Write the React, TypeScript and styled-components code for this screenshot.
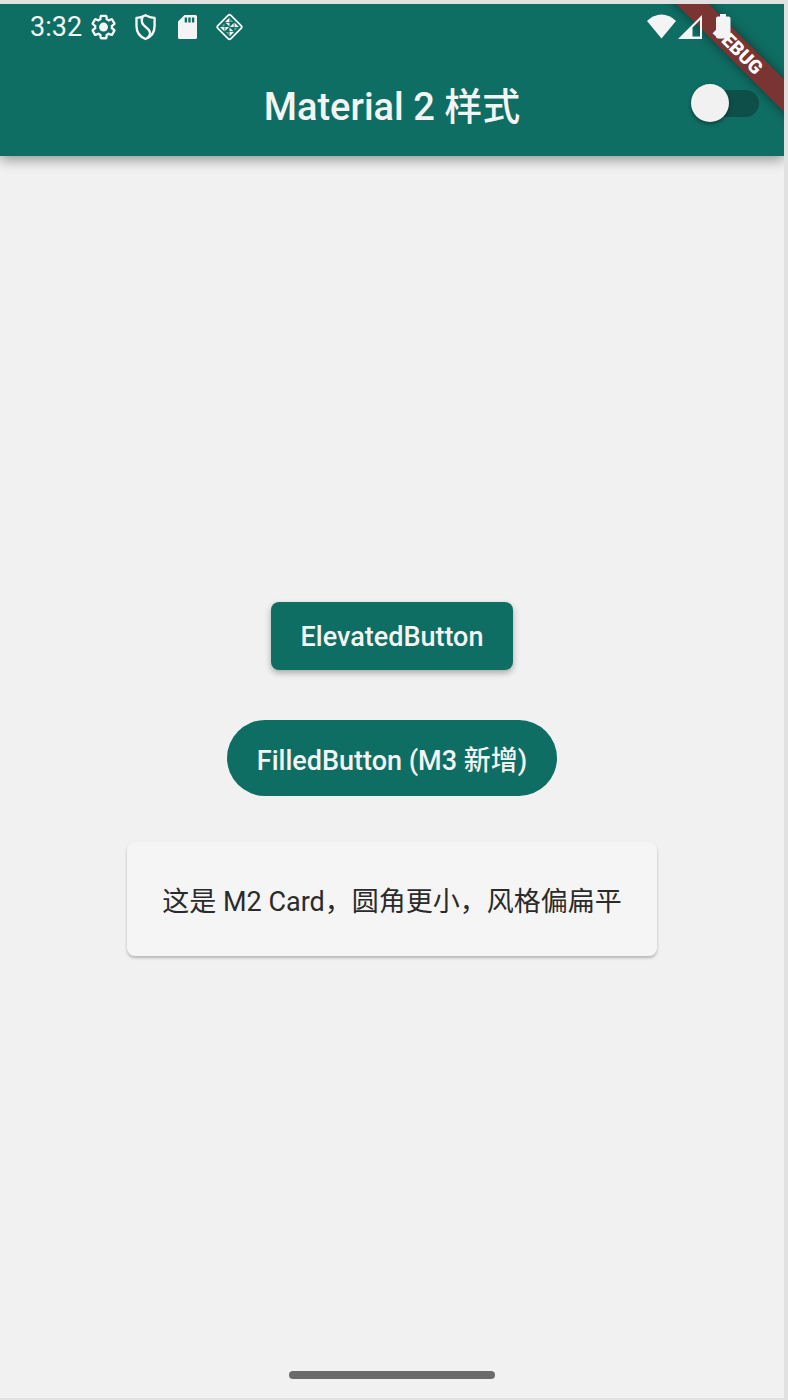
import React from "react";
import styled, { createGlobalStyle } from "styled-components";

const color = {
  teal: "#0f6e63",
  light: "#f4f4f4",
  surface: "#f1f1f1",
  card: "#f5f5f5",
  frame: "#e1e1e1",
  ink: "#2b2b2b",
};

const GlobalStyle = createGlobalStyle`
  * { box-sizing: border-box; }
  body {
    margin: 0;
    background: ${color.frame};
    font-family: Roboto, "Noto Sans CJK SC", sans-serif;
  }
`;

const Frame = styled.div`
  display: flex;
  min-height: 100vh;
  padding: 4px 4px 2px 0;
`;

const Screen = styled.div`
  position: relative;
  flex: 1;
  display: flex;
  flex-direction: column;
  overflow: hidden;
  background: ${color.surface};
`;

const Header = styled.header`
  background: ${color.teal};
  color: ${color.light};
  box-shadow: 0 4px 12px rgba(0, 0, 0, 0.38);
`;

const StatusBar = styled.div`
  position: relative;
  z-index: 2;
  display: flex;
  align-items: center;
  justify-content: space-between;
  height: 46px;
  padding: 0 45px 0 30px;
`;

const StatusGroup = styled.div`
  display: flex;
  align-items: center;
`;

const Clock = styled.time`
  width: 52px;
  font-size: 27px;
  line-height: 32px;
`;

const Glyph = styled.svg`
  display: block;
  fill: currentColor;
`;

const AppBar = styled.div`
  display: grid;
  grid-template-columns: 1fr auto 1fr;
  align-items: center;
  height: 106px;
  padding: 0 24px;
`;

const Title = styled.h1`
  grid-column: 2;
  margin: 0;
  padding-top: 8px;
  font-size: 38px;
  font-weight: 500;
  line-height: 56px;
`;

const Switch = styled.input`
  appearance: none;
  justify-self: end;
  display: flex;
  align-items: center;
  width: 69px;
  height: 38px;
  margin: 0;
  cursor: pointer;

  &::before {
    content: "";
    width: 38px;
    height: 38px;
    border-radius: 50%;
    background: ${color.surface};
    box-shadow: 0 2px 4px rgba(0, 0, 0, 0.4);
    z-index: 1;
  }
  &::after {
    content: "";
    width: 61px;
    height: 27px;
    margin-left: -31px;
    border-radius: 14px;
    background: #0f4f49;
  }
  &:checked::before {
    order: 2;
    margin-left: -31px;
  }
  &:checked::after {
    margin-left: 0;
    background: #5fa39b;
  }
`;

const DebugBanner = styled.div`
  position: absolute;
  z-index: 1;
  top: 34px;
  right: -54px;
  width: 200px;
  height: 23px;
  transform: rotate(45deg);
  background: #7a3432;
  box-shadow: 0 0 12px rgba(0, 0, 0, 0.45);
  color: #ffffff;
  font-size: 19px;
  font-weight: 900;
  line-height: 23px;
  text-align: center;
`;

const Content = styled.main`
  flex: 1;
  display: flex;
  flex-direction: column;
  align-items: center;
  justify-content: center;
  padding: 46px 16px 16px;
`;

const Button = styled.button<{ $pill?: boolean }>`
  height: ${(p) => (p.$pill ? 76 : 68)}px;
  padding: ${(p) => (p.$pill ? "6px 30px 0" : "2px 30px 0")};
  border: 0;
  border-radius: ${(p) => (p.$pill ? 38 : 8)}px;
  background: ${color.teal};
  color: ${color.light};
  box-shadow: ${(p) => (p.$pill ? "none" : "0 3px 6px rgba(0, 0, 0, 0.3)")};
  font-family: inherit;
  font-size: 27px;
  font-weight: 500;
  line-height: 38px;
  cursor: pointer;

  & + & {
    margin-top: 50px;
  }
`;

const Card = styled.section`
  margin-top: 46px;
  padding: 41px 35px 35px;
  border-radius: 8px;
  background: ${color.card};
  box-shadow: 0 2px 3px rgba(0, 0, 0, 0.25);
`;

const CardText = styled.p`
  margin: 0;
  color: ${color.ink};
  font-size: 27px;
  line-height: 38px;
`;

const HomeHandle = styled.div`
  align-self: center;
  width: 206px;
  height: 8px;
  margin-bottom: 19px;
  border-radius: 4px;
  background: #6b6b6b;
`;

const NotificationIcons = () => (
  <>
    <Glyph width="42" height="32" viewBox="0 0 42 32" aria-hidden="true">
      <g transform="translate(7.5 2) scale(1.17)">
        <path
          fill="none"
          stroke="currentColor"
          strokeWidth="2"
          d="M19.14 12.94c.04-.3.06-.61.06-.94 0-.32-.02-.64-.07-.94l2.03-1.58c.18-.14.23-.41.12-.61l-1.92-3.32c-.12-.22-.37-.29-.59-.22l-2.39.96c-.5-.38-1.03-.7-1.62-.94l-.36-2.54c-.04-.24-.24-.41-.48-.41h-3.84c-.24 0-.43.17-.47.41l-.36 2.54c-.59.24-1.13.57-1.62.94l-2.39-.96c-.22-.08-.47 0-.59.22L2.74 8.87c-.12.21-.08.47.12.61l2.03 1.58c-.05.3-.09.63-.09.94s.02.64.07.94l-2.03 1.58c-.18.14-.23.41-.12.61l1.92 3.32c.12.22.37.29.59.22l2.39-.96c.5.38 1.03.7 1.62.94l.36 2.54c.05.24.24.41.48.41h3.84c.24 0 .44-.17.47-.41l.36-2.54c.59-.24 1.13-.56 1.62-.94l2.39.96c.22.08.47 0 .59-.22l1.92-3.32c.12-.22.07-.47-.12-.61l-2.01-1.58z"
        />
        <circle cx="12" cy="12" r="3.8" />
      </g>
    </Glyph>
    <Glyph width="42" height="32" viewBox="0 0 42 32" aria-hidden="true">
      <g fill="none" stroke="currentColor" strokeWidth="2.4" strokeLinejoin="round">
        <path d="M21.5 4.2C19 5.6 16 6.7 12.5 7V15C12.5 21 15.5 25.6 21.5 28C27.5 25.6 30.6 21 30.6 15V7C27.2 6.7 24 5.6 21.5 4.2Z" />
        <path d="M18.6 5.5C17.6 8 17.4 11.5 19.4 13.8L24.6 18.6C26.8 21 26 24.5 23.5 27" />
      </g>
    </Glyph>
    <Glyph width="42" height="32" viewBox="0 0 42 32" aria-hidden="true">
      <path
        fillRule="evenodd"
        d="M18.5 4H29.5Q31 4 31 5.5V26.5Q31 28 29.5 28H13.5Q12 28 12 26.5V10.5ZM18.7 6.5V11.5H21.1V6.5ZM22.3 6.5V11.5H24.7V6.5ZM25.9 6.5V11.5H28.3V6.5Z"
      />
    </Glyph>
    <Glyph width="42" height="32" viewBox="0 0 42 32" aria-hidden="true">
      <g transform="translate(21.5 16) rotate(45)">
        <rect x="-9.2" y="-9.2" width="18.4" height="18.4" rx="2" fill="none" stroke="currentColor" strokeWidth="1.8" />
      </g>
      <g transform="translate(21.5 16)">
        <path d="M0 -9.5V-5H-4.5ZM9.5 0H5V-4.5ZM0 9.5V5H4.5ZM-9.5 0H-5V4.5Z" />
        <path d="M-4 -4.2H0V-.4ZM4.2 -4V0H.4ZM4 4.2H0V.4ZM-4.2 4V0H-.4Z" />
        <path d="M.8 -8V-5H3.8ZM8 .8H5V3.8ZM-.8 8V5H-3.8ZM-8 -.8H-5V-3.8Z" opacity=".45" />
      </g>
    </Glyph>
  </>
);

const SystemIcons = () => (
  <>
    <Glyph width="31" height="32" viewBox="0 0 31 32" aria-hidden="true">
      <path d="M1 10Q7.5 3.5 15.5 3.5T30 10L15.5 27.5Z" />
    </Glyph>
    <Glyph width="31" height="32" viewBox="0 0 31 32" aria-hidden="true">
      <path fillRule="evenodd" d="M1 28L25 4V28ZM15.5 25.5H23V9L15.5 16.5Z" />
    </Glyph>
    <Glyph width="31" height="32" viewBox="0 0 31 32" aria-hidden="true">
      <path d="M12 3H18V5.5H20.5Q22.5 5.5 22.5 7.5V25.5Q22.5 27.5 20.5 27.5H10Q8 27.5 8 25.5V7.5Q8 5.5 10 5.5H12Z" />
    </Glyph>
  </>
);

export default function App() {
  const [material3, setMaterial3] = React.useState(false);

  return (
    <>
      <GlobalStyle />
      <Frame>
        <Screen>
          <Header>
            <StatusBar>
              <StatusGroup>
                <Clock>3:32</Clock>
                <NotificationIcons />
              </StatusGroup>
              <StatusGroup>
                <SystemIcons />
              </StatusGroup>
            </StatusBar>
            <AppBar>
              <Title>Material 2 样式</Title>
              <Switch
                type="checkbox"
                role="switch"
                aria-label="Material 3"
                checked={material3}
                onChange={(e) => setMaterial3(e.target.checked)}
              />
            </AppBar>
          </Header>
          <DebugBanner>DEBUG</DebugBanner>
          <Content>
            <Button type="button">ElevatedButton</Button>
            <Button type="button" $pill>
              FilledButton (M3 新增)
            </Button>
            <Card>
              <CardText>这是 M2 Card，圆角更小，风格偏扁平</CardText>
            </Card>
          </Content>
          <HomeHandle />
        </Screen>
      </Frame>
    </>
  );
}
